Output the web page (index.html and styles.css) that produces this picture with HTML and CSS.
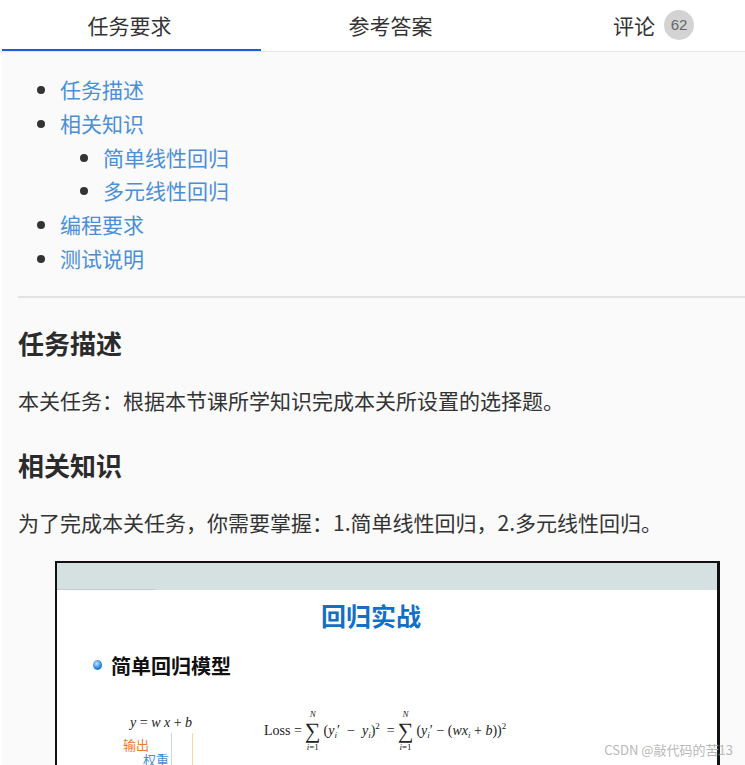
FILE: index.html
```html
<!DOCTYPE html>
<html lang="zh-CN">
<head>
    <meta charset="UTF-8">
    <meta name="viewport" content="width=device-width, initial-scale=1.0">
    <title>任务要求</title>
    <link rel="stylesheet" href="styles.css">
</head>
<body>

    <div class="tabs">
        <div class="tab active">任务要求</div>
        <div class="tab">参考答案</div>
        <div class="tab">评论 <span class="badge">62</span></div>
    </div>

    <div class="content">
        <!-- Table of contents -->
        <ul class="toc">
            <li><a href="#">任务描述</a></li>
            <li><a href="#">相关知识</a>
                <ul>
                    <li><a href="#">简单线性回归</a></li>
                    <li><a href="#">多元线性回归</a></li>
                </ul>
            </li>
            <li><a href="#">编程要求</a></li>
            <li><a href="#">测试说明</a></li>
        </ul>

        <hr class="divider">

        <h2>任务描述</h2>
        <p>本关任务：根据本节课所学知识完成本关所设置的选择题。</p>

        <h2 class="second">相关知识</h2>
        <p>为了完成本关任务，你需要掌握：1.简单线性回归，2.多元线性回归。</p>

        <!-- Slide picture -->
        <div class="slide">
            <div class="slide-band"><span class="band-line"></span></div>
            <div class="slide-title">回归实战</div>
            <div class="slide-point"><span class="dot"></span>简单回归模型</div>
            <div class="formulas">
                <div class="linear">
                    <div class="eq"><i>y</i> = <i>w</i> <i>x</i> + <i>b</i></div>
                    <span class="mark out">输出</span>
                    <span class="mark weight">权重</span>
                    <span class="vline v1"></span>
                    <span class="vline v2"></span>
                </div>
                <div class="loss">
                    <span>Loss =</span>
                    <span class="sum"><small><i>N</i></small><b>∑</b><small><i>i</i>=1</small></span>
                    <span>(<i>y</i><sub><i>i</i></sub>′ &nbsp;− &nbsp;<i>y</i><sub><i>i</i></sub>)<sup>2</sup> &nbsp;=</span>
                    <span class="sum"><small><i>N</i></small><b>∑</b><small><i>i</i>=1</small></span>
                    <span>(<i>y</i><sub><i>i</i></sub>′ − (<i>wx</i><sub><i>i</i></sub> + <i>b</i>))<sup>2</sup></span>
                </div>
            </div>
            <div class="watermark">CSDN @敲代码的苦13</div>
        </div>
    </div>

</body>
</html>
```

FILE: styles.css
```css
body {
    margin: 0;
    background-color: white;
    font-family: "Noto Sans CJK SC", "Noto Sans", sans-serif;
    color: #333;
    overflow: hidden;
}

.tabs {
    display: flex;
    height: 51px;
    padding-left: 2px;
    border-bottom: 1px solid #e6e6e6;
    overflow: hidden;
    background-color: white;
}

.tab {
    flex: 0 0 259px;
    display: flex;
    justify-content: center;
    align-items: center;
    gap: 9px;
    font-size: 21px;
    color: #333;
    box-sizing: border-box;
    padding-bottom: 2px;
}

.tab:last-child {
    padding-left: 8px;
}

.tab.active {
    border-bottom: 2px solid #1a5fd6;
    padding-bottom: 0;
    padding-right: 4px;
}

.badge {
    display: inline-flex;
    justify-content: center;
    align-items: center;
    width: 30px;
    height: 30px;
    border-radius: 50%;
    background-color: #d3d3d3;
    color: #666;
    font-size: 15px;
    font-family: "Liberation Sans", sans-serif;
}

.content {
    margin-left: 2px;
    padding: 21px 0 0 16px;
    background-color: #fafafa;
    height: 800px;
}

.toc {
    margin: 0;
    padding-left: 42px;
    font-size: 21px;
    line-height: 33.8px;
}

.toc ul {
    margin: 0;
    padding-left: 43px;
}

.toc li {
    list-style: disc;
    color: #333;
}

.toc a {
    color: #4a8fd8;
    text-decoration: none;
}

.divider {
    margin: 20px 0 0 0;
    border: none;
    border-top: 2px solid #e3e3e3;
}

h2 {
    margin: 27px 0 0 0;
    font-size: 26px;
    line-height: 36px;
    font-weight: bold;
    color: #2b2b2b;
}

h2.second {
    margin-top: 32px;
}

p {
    margin: 24px 0 0 0;
    font-size: 21px;
    line-height: 30px;
    color: #333;
}

.slide {
    position: relative;
    margin: 24px 0 0 37px;
    width: 665px;
    height: 240px;
    box-sizing: border-box;
    border: 2px solid #111;
    border-right-width: 3px;
    background-color: white;
}

.slide-band {
    height: 27px;
    background-color: #d5e1e1;
    position: relative;
}

.band-line {
    position: absolute;
    left: 0;
    bottom: 0;
    width: 98px;
    height: 1px;
    background-color: #c3cccc;
}

.slide-title {
    margin: 8px 0 0 0;
    padding-right: 32px;
    text-align: center;
    font-size: 25px;
    line-height: 34px;
    font-weight: bold;
    color: #1370c4;
}

.slide-point {
    display: flex;
    align-items: center;
    gap: 9px;
    margin: 19px 0 0 36px;
    font-size: 20px;
    font-weight: bold;
    color: #111;
}

.dot {
    width: 9px;
    height: 10px;
    border-radius: 50%;
    background: radial-gradient(circle at 40% 35%, #bfe3ff, #1d7fd6 60%, #0d5aa8);
}

.formulas {
    display: flex;
    margin: 35px 0 0 0;
    font-family: "Liberation Serif", serif;
    font-size: 14px;
    color: #222;
}

.linear {
    position: relative;
    width: 207px;
    height: 60px;
    padding-left: 73px;
    box-sizing: border-box;
}

.eq {
    font-size: 14px;
}

.mark {
    position: absolute;
    font-family: "Noto Sans CJK SC", sans-serif;
    font-size: 13px;
}

.out {
    left: 66px;
    top: 20px;
    color: #f07a2c;
}

.weight {
    left: 86px;
    top: 35px;
    color: #4a8fd8;
}

.vline {
    position: absolute;
    top: 18px;
    width: 1px;
    height: 40px;
}

.v1 {
    left: 114px;
    background-color: #c8d6e6;
}

.v2 {
    left: 135px;
    background-color: #f7d79a;
}

.loss {
    display: flex;
    align-items: center;
    gap: 3px;
    margin-top: -9px;
    height: 50px;
}

.sum {
    display: inline-flex;
    flex-direction: column;
    align-items: center;
}

.sum b {
    font-weight: normal;
    font-size: 22px;
    line-height: 22px;
}

.sum small {
    font-size: 9px;
    line-height: 11px;
}

sub, sup {
    font-size: 9px;
}

.watermark {
    position: absolute;
    right: -16px;
    top: 177px;
    font-size: 13px;
    color: #b8b8b8;
    text-shadow: 0 0 2px white;
}
```
